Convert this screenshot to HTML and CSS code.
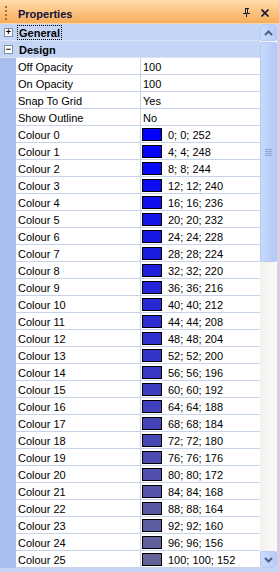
FILE: index.html
```html
<!DOCTYPE html>
<html>
<head>
<meta charset="utf-8">
<link rel="stylesheet" href="styles.css">
</head>
<body>
<div class="panel">
  <div class="titlebar">
    <span class="grip"></span>
    <span class="title">Properties</span>
    <span class="tb-icons">
      <svg class="pin" width="8" height="9" viewBox="0 0 8 9"><path d="M2 0h4v1H5v4h2v1H4v3H3V6H0V5h2V1H2z M3 1v4h1V1z" fill="#1a1a3a" fill-rule="evenodd"/></svg>
      <svg class="close" width="9" height="8" viewBox="0 0 9 8"><path d="M0.5 0.5l7 7M7.5 0.5l-7 7" stroke="#1a1a3a" stroke-width="1.7"/></svg>
    </span>
  </div>
  <div class="body">
    <div class="rows">
      <div class="cat"><span class="margin"><span class="box">+</span></span><span class="cat-label focus">General</span></div>
      <div class="cat"><span class="margin"><span class="box">&minus;</span></span><span class="cat-label">Design</span></div>
      <div class="row"><span class="margin"></span><span class="name">Off Opacity</span><span class="val">100</span></div>
      <div class="row"><span class="margin"></span><span class="name">On Opacity</span><span class="val">100</span></div>
      <div class="row"><span class="margin"></span><span class="name">Snap To Grid</span><span class="val">Yes</span></div>
      <div class="row"><span class="margin"></span><span class="name">Show Outline</span><span class="val">No</span></div>
      <div class="row"><span class="margin"></span><span class="name">Colour 0</span><span class="val"><i class="sw" style="background:rgb(0,0,252)"></i>0; 0; 252</span></div>
      <div class="row"><span class="margin"></span><span class="name">Colour 1</span><span class="val"><i class="sw" style="background:rgb(4,4,248)"></i>4; 4; 248</span></div>
      <div class="row"><span class="margin"></span><span class="name">Colour 2</span><span class="val"><i class="sw" style="background:rgb(8,8,244)"></i>8; 8; 244</span></div>
      <div class="row"><span class="margin"></span><span class="name">Colour 3</span><span class="val"><i class="sw" style="background:rgb(12,12,240)"></i>12; 12; 240</span></div>
      <div class="row"><span class="margin"></span><span class="name">Colour 4</span><span class="val"><i class="sw" style="background:rgb(16,16,236)"></i>16; 16; 236</span></div>
      <div class="row"><span class="margin"></span><span class="name">Colour 5</span><span class="val"><i class="sw" style="background:rgb(20,20,232)"></i>20; 20; 232</span></div>
      <div class="row"><span class="margin"></span><span class="name">Colour 6</span><span class="val"><i class="sw" style="background:rgb(24,24,228)"></i>24; 24; 228</span></div>
      <div class="row"><span class="margin"></span><span class="name">Colour 7</span><span class="val"><i class="sw" style="background:rgb(28,28,224)"></i>28; 28; 224</span></div>
      <div class="row"><span class="margin"></span><span class="name">Colour 8</span><span class="val"><i class="sw" style="background:rgb(32,32,220)"></i>32; 32; 220</span></div>
      <div class="row"><span class="margin"></span><span class="name">Colour 9</span><span class="val"><i class="sw" style="background:rgb(36,36,216)"></i>36; 36; 216</span></div>
      <div class="row"><span class="margin"></span><span class="name">Colour 10</span><span class="val"><i class="sw" style="background:rgb(40,40,212)"></i>40; 40; 212</span></div>
      <div class="row"><span class="margin"></span><span class="name">Colour 11</span><span class="val"><i class="sw" style="background:rgb(44,44,208)"></i>44; 44; 208</span></div>
      <div class="row"><span class="margin"></span><span class="name">Colour 12</span><span class="val"><i class="sw" style="background:rgb(48,48,204)"></i>48; 48; 204</span></div>
      <div class="row"><span class="margin"></span><span class="name">Colour 13</span><span class="val"><i class="sw" style="background:rgb(52,52,200)"></i>52; 52; 200</span></div>
      <div class="row"><span class="margin"></span><span class="name">Colour 14</span><span class="val"><i class="sw" style="background:rgb(56,56,196)"></i>56; 56; 196</span></div>
      <div class="row"><span class="margin"></span><span class="name">Colour 15</span><span class="val"><i class="sw" style="background:rgb(60,60,192)"></i>60; 60; 192</span></div>
      <div class="row"><span class="margin"></span><span class="name">Colour 16</span><span class="val"><i class="sw" style="background:rgb(64,64,188)"></i>64; 64; 188</span></div>
      <div class="row"><span class="margin"></span><span class="name">Colour 17</span><span class="val"><i class="sw" style="background:rgb(68,68,184)"></i>68; 68; 184</span></div>
      <div class="row"><span class="margin"></span><span class="name">Colour 18</span><span class="val"><i class="sw" style="background:rgb(72,72,180)"></i>72; 72; 180</span></div>
      <div class="row"><span class="margin"></span><span class="name">Colour 19</span><span class="val"><i class="sw" style="background:rgb(76,76,176)"></i>76; 76; 176</span></div>
      <div class="row"><span class="margin"></span><span class="name">Colour 20</span><span class="val"><i class="sw" style="background:rgb(80,80,172)"></i>80; 80; 172</span></div>
      <div class="row"><span class="margin"></span><span class="name">Colour 21</span><span class="val"><i class="sw" style="background:rgb(84,84,168)"></i>84; 84; 168</span></div>
      <div class="row"><span class="margin"></span><span class="name">Colour 22</span><span class="val"><i class="sw" style="background:rgb(88,88,164)"></i>88; 88; 164</span></div>
      <div class="row"><span class="margin"></span><span class="name">Colour 23</span><span class="val"><i class="sw" style="background:rgb(92,92,160)"></i>92; 92; 160</span></div>
      <div class="row"><span class="margin"></span><span class="name">Colour 24</span><span class="val"><i class="sw" style="background:rgb(96,96,156)"></i>96; 96; 156</span></div>
      <div class="row"><span class="margin"></span><span class="name">Colour 25</span><span class="val"><i class="sw" style="background:rgb(100,100,152)"></i>100; 100; 152</span></div>
    </div>
    <div class="scroll">
      <div class="sbtn up"><svg width="9" height="6" viewBox="0 0 9 6"><path d="M1 5l3.5-3.5L8 5" fill="none" stroke="#4d6185" stroke-width="2"/></svg></div>
      <div class="track">
        <div class="thumb"><span class="grip-lines"></span></div>
      </div>
      <div class="sbtn down"><svg width="9" height="6" viewBox="0 0 9 6"><path d="M1 1l3.5 3.5L8 1" fill="none" stroke="#4d6185" stroke-width="2"/></svg></div>
    </div>
  </div>
</div>
</body>
</html>
```

FILE: styles.css
```css
html, body {
  margin: 0;
  padding: 0;
  background: #ffffff;
}
.panel {
  width: 279px;
  height: 572px;
  display: flex;
  flex-direction: column;
  font-family: "Liberation Sans", Arial, sans-serif;
  font-size: 11px;
  color: #000;
  background: #c4d5f6;
  overflow: hidden;
}
.titlebar {
  height: 23px;
  flex: none;
  display: flex;
  align-items: center;
  background: linear-gradient(#ffdcab, #fbc27e 55%, #f7ad5c);
  border-bottom: 1px solid #f9d6a8;
}
.grip {
  width: 2px;
  height: 14px;
  margin-left: 5px;
  margin-right: 11px;
  margin-top: 2px;
  background: repeating-linear-gradient(#b06a2a 0 2px, transparent 2px 4px);
}
.title {
  font-weight: bold;
  font-size: 11px;
  color: #10103a;
  flex: 1;
  padding-top: 4px;
}
.tb-icons {
  display: flex;
  align-items: center;
  gap: 10px;
  margin-right: 9px;
  padding-top: 2px;
}
.pin, .close { display: block; }
.body {
  flex: 1;
  display: flex;
  min-height: 0;
  border-bottom: 4px solid #c4d5f6;
  border-right: 2px solid #c4d5f6;
}
.rows {
  width: 260px;
  flex: none;
  overflow: hidden;
  background: #fff;
}
.cat, .row {
  height: 17px;
  display: flex;
  box-sizing: border-box;
}
.margin {
  width: 16px;
  flex: none;
  background: #a8bfee;
  display: flex;
  align-items: center;
  justify-content: center;
}
.cat {
  background: #c4d5f6;
  border-bottom: 1px solid #d8e3f8;
  align-items: flex-start;
}
.cat .margin {
  background: #c4d5f6;
  align-self: stretch;
}
.box {
  width: 7px;
  height: 7px;
  border: 1px solid #7f8ea8;
  background: #fff;
  font-size: 9px;
  line-height: 7px;
  text-align: center;
  color: #000;
  font-weight: bold;
  margin-left: 1px;
  margin-top: 1px;
}
.cat-label {
  font-weight: bold;
  font-size: 11px;
  padding: 1px 1px 0;
  margin-left: 1px;
  margin-top: 1px;
  height: 12px;
  line-height: 12px;
  border: 1px solid transparent;
}
.cat-label.focus {
  border: 1px dotted #000;
}
.row .name {
  width: 125px;
  flex: none;
  box-sizing: border-box;
  padding-left: 2px;
  padding-top: 2px;
  border-right: 1px solid #c6d3ea;
  border-bottom: 1px solid #c6d3ea;
  line-height: 14px;
  white-space: nowrap;
  overflow: hidden;
}
.row .val {
  flex: 1;
  box-sizing: border-box;
  padding-left: 2px;
  border-bottom: 1px solid #c6d3ea;
  line-height: 14px;
  display: flex;
  align-items: center;
  white-space: nowrap;
}
.val-text { display: block; }
.sw {
  display: block;
  width: 18px;
  height: 11px;
  border: 1px solid #000;
  margin-right: 6px;
  margin-left: -1px;
}
.row .val {
  padding-top: 1px;
}
.scroll {
  width: 17px;
  flex: none;
  display: flex;
  flex-direction: column;
  background: linear-gradient(90deg, #f3f1ee, #fbfaf8);
}
.sbtn {
  height: 17px;
  flex: none;
  box-sizing: border-box;
  border: 1px solid #b7cbf4;
  border-radius: 2px;
  background: linear-gradient(90deg, #c9dafd, #b9cdf7);
  display: flex;
  align-items: center;
  justify-content: center;
}
.track {
  flex: 1;
  padding: 1px 0;
}
.thumb {
  height: 220px;
  box-sizing: border-box;
  border: 1px solid #b3c8f3;
  border-radius: 2px;
  background: linear-gradient(90deg, #c8d9fd, #bad0fa 60%, #b4c9f5);
  display: flex;
  align-items: center;
  justify-content: center;
}
.grip-lines {
  width: 7px;
  height: 7px;
  background: repeating-linear-gradient(#8ea6d6 0 1px, transparent 1px 2px);
}
```
